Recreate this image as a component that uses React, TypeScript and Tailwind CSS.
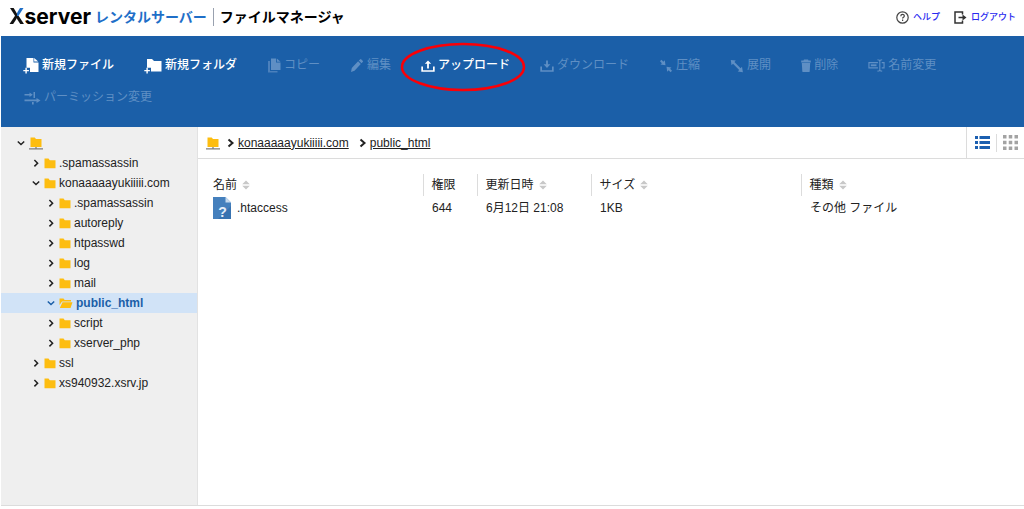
import { ReactNode } from 'react'
import clsx from 'clsx'

const FilePlusIcon = () => (
  <svg width="16" height="17" viewBox="0 0 16 17" fill="currentColor">
    <path d="M3.500 1h7v4.500H15.500V15H7v-4.200H3.500z" />
    <path d="M11.200 1l4 3.600h-4z" />
    <path d="M2.400 10.800h1.400v2.100h2.100v1.400H3.800v2.100H2.400v-2.100H.3v-1.400h2.100z" />
  </svg>
)

const FolderPlusIcon = () => (
  <svg width="18" height="17" viewBox="0 0 18 17" fill="currentColor">
    <path d="M3 2h5l2 2h7.500v10.500H7v-3.700H3z" />
    <path d="M2.400 10.800h1.400v2.100h2.100v1.400H3.800v2.100H2.400v-2.100H.3v-1.400h2.100z" />
  </svg>
)

const CopyIcon = () => (
  <svg width="14" height="16" viewBox="0 0 14 16" fill="currentColor">
    <path d="M4 1.500h5v4H13.500V13H4z" />
    <path d="M9.800 1.500l3.700 3.300H9.800z" />
    <path d="M1 4h2v10h7.500v1.500H1z" opacity=".7" />
  </svg>
)

const PencilIcon = () => (
  <svg width="14" height="16" viewBox="0 0 14 16" fill="currentColor">
    <path d="M10 2.400a1 1 0 011.400 0l1.300 1.300a1 1 0 010 1.400l-1.200 1.200-2.700-2.700zM8.100 4.300l2.700 2.700-6.300 6.800L1 15l.8-4z" />
  </svg>
)

const UploadIcon = () => (
  <svg width="14" height="16" viewBox="0 0 14 16" fill="currentColor">
    <path d="M7 3.500l3.200 3.300H7.900V11.500H6.100V6.800H3.800z" />
    <path d="M.3 9.500H2v3.700h10V9.500h1.700v5.200H.3z" />
  </svg>
)

const DownloadIcon = () => (
  <svg width="14" height="16" viewBox="0 0 14 16" fill="currentColor">
    <path d="M6.100 3.500h1.800v3.700h2.500L7 11 3.600 7.200h2.500z" />
    <path d="M.3 9.500H2v3.700h10V9.500h1.700v5.200H.3z" />
  </svg>
)

const CompressIcon = () => (
  <svg width="14" height="16" viewBox="0 0 14 16" fill="currentColor">
    <path d="M2.400 2.800l2 1.900 1.400-1.400.7 5-5-.7L2.900 6.200 1 4.200zM11.600 15.200l-2-1.900-1.400 1.400-.7-5 5 .7-1.400 1.400 1.900 2z" />
  </svg>
)

const ExpandIcon = () => (
  <svg width="14" height="16" viewBox="0 0 14 16" fill="currentColor">
    <path d="M.8 3l5 .6-1.400 1.400 6.200 6.200 1.400-1.400.9 5.400-5.200-.8 1.500-1.400L3 6.800 1.500 8.300z" />
  </svg>
)

const TrashIcon = () => (
  <svg width="10" height="16" viewBox="0 0 10 16" fill="currentColor">
    <path d="M3 2.500h4l.5 1h2.300v2H.2v-2h2.300zM.8 6h8.400l-.5 8.200a1 1 0 01-1 .9H2.300a1 1 0 01-1-.9z" />
  </svg>
)

const RenameIcon = () => (
  <svg width="17" height="16" viewBox="0 0 18 16" fill="none" stroke="currentColor" strokeWidth="1.200">
    <path d="M10.500 5.500H1v5.500h9.500M14.500 5.500H17v5.500h-2.500M10 2.500c1.700 0 2.500.4 2.500 1.500v9c0 1.100-.8 1.500-2.500 1.500M15 2.500c-1.700 0-2.500.4-2.500 1.500M15 14.500c-1.700 0-2.500-.4-2.500-1.500" />
    <path d="M3 8.300h6" strokeWidth="2" />
  </svg>
)

const PermissionIcon = () => (
  <svg width="18" height="16" viewBox="0 0 18 16" fill="currentColor">
    <path d="M1.500 5h5V3.500l3.300 2.300-3.300 2.300V6.600h-5zM10.500 3H12v6h-1.500zM1.500 10.500h12V9l4 2.500-4 2.500v-1.700h-12zM9 13h1.700v2.500H9z" />
  </svg>
)

const FolderIcon = () => (
  <svg width="12" height="12" viewBox="0 0 12 12">
    <path d="M.5 1.500h4l1.300 1.700h5.700v8H.5z" fill="#fdbd10" />
  </svg>
)

const OpenFolderIcon = () => (
  <svg width="14" height="12" viewBox="0 0 14 12" fill="#fdbd10">
    <path d="M.5 1.500h4L5.700 3H12v1.500H3L.5 8z" />
    <path d="M3.500 5.200h10L11.500 11H.8z" />
  </svg>
)

const ServerFolderIcon = () => (
  <svg width="14" height="14" viewBox="0 0 14 14">
    <path d="M1.500 1.500h4.200L7 3h5.500v8h-11z" fill="#fdbd10" />
    <path d="M0 12.800h14M7 11v2" stroke="#7d7d7d" strokeWidth="1.300" />
  </svg>
)

const Chevron = ({ open, bold, className }: { open?: boolean; bold?: boolean; className?: string }) => (
  <svg width="8" height="10" viewBox="0 0 8 10" fill="none" stroke="currentColor" strokeWidth={bold ? 2 : 1.5} className={className}>
    <path d={open ? 'M.8 3.500L4 6.500l3.200-3' : bold ? 'M1.500 1.500L5.500 5l-4 3.500' : 'M2.400 2L5.600 5.200l-3.200 3.200'} />
  </svg>
)

const SortIcon = () => (
  <svg width="8" height="10" viewBox="0 0 8 10" fill="#c8c8c8">
    <path d="M4 .5L7.800 4.200H.2zM4 9.500L.2 5.800h7.600z" />
  </svg>
)

const UnknownFileIcon = () => (
  <span className="relative flex h-[22px] w-[18px] shrink-0 items-center justify-center">
    <svg width="18" height="22" viewBox="0 0 18 22" className="absolute inset-0">
      <path d="M0 0h12.500L18 5.500V22H0z" fill="#4580bd" />
      <path d="M18 9v13H5z" fill="#2c65a5" opacity=".5" />
      <path d="M12.500 0v5.500H18z" fill="#c6daee" />
    </svg>
    <span className="relative pt-2 pl-px text-sm leading-4 font-bold text-[#e4eef8]">?</span>
  </span>
)

const actions: { label: string; icon: ReactNode; enabled?: boolean; marked?: boolean }[] = [
  { label: '新規ファイル', icon: <FilePlusIcon />, enabled: true },
  { label: '新規フォルダ', icon: <FolderPlusIcon />, enabled: true },
  { label: 'コピー', icon: <CopyIcon /> },
  { label: '編集', icon: <PencilIcon /> },
  { label: 'アップロード', icon: <UploadIcon />, enabled: true, marked: true },
  { label: 'ダウンロード', icon: <DownloadIcon /> },
  { label: '圧縮', icon: <CompressIcon /> },
  { label: '展開', icon: <ExpandIcon /> },
  { label: '削除', icon: <TrashIcon /> },
  { label: '名前変更', icon: <RenameIcon /> },
  { label: 'パーミッション変更', icon: <PermissionIcon /> },
]

const tree = [
  { name: '.spamassassin', level: 1 },
  { name: 'konaaaaayukiiiii.com', level: 1, open: true },
  { name: '.spamassassin', level: 2 },
  { name: 'autoreply', level: 2 },
  { name: 'htpasswd', level: 2 },
  { name: 'log', level: 2 },
  { name: 'mail', level: 2 },
  { name: 'public_html', level: 2, open: true, selected: true },
  { name: 'script', level: 2 },
  { name: 'xserver_php', level: 2 },
  { name: 'ssl', level: 1 },
  { name: 'xs940932.xsrv.jp', level: 1 },
]

const columns = [
  { label: '名前', sortable: true, width: 'w-[225px]' },
  { label: '権限', sortable: false, width: 'w-[54px]' },
  { label: '更新日時', sortable: true, width: 'w-[114px]' },
  { label: 'サイズ', sortable: true, width: 'w-[210px]' },
  { label: '種類', sortable: true, width: '' },
]

function Header() {
  return (
    <header className="flex h-9 items-center justify-between pr-2 pb-0.5 pl-2">
      <h1 className="flex items-center text-sm font-bold text-black">
        <span className="font-['Inter',sans-serif] text-[21px] leading-6 font-bold">
          <span className="bg-[conic-gradient(#1f6fc8_90deg,#111_90deg)] bg-clip-text text-transparent">X</span>
          server
        </span>
        <span className="ml-1 text-[#1f6fc8]">レンタルサーバー</span>
        <span className="mx-1.5 h-[18px] w-px bg-gray-400" />
        <span>ファイルマネージャ</span>
      </h1>
      <nav className="flex items-center gap-3.5 text-[9px] font-medium text-[#2a2af0]">
        <a href="#help" className="flex items-center gap-1">
          <svg width="13" height="13" viewBox="0 0 13 13" fill="none" stroke="#444" strokeWidth="1.200">
            <circle cx="6.500" cy="6.500" r="5.700" />
            <path d="M4.800 5.200c0-2.300 3.500-2.300 3.500-.2 0 1.300-1.700 1.300-1.700 2.600M6.600 8.600v1.300" />
          </svg>
          ヘルプ
        </a>
        <a href="#logout" className="flex items-center gap-1">
          <svg width="13" height="13" viewBox="0 0 13 13">
            <path d="M8.500 3.500V1H1v11h7.500V9.500" fill="none" stroke="#333" strokeWidth="1.500" />
            <path d="M4.500 5.700h4V3.500l4 3-4 3V7.300h-4z" fill="#333" />
          </svg>
          ログアウト
        </a>
      </nav>
    </header>
  )
}

function Toolbar() {
  return (
    <div className="flex flex-wrap gap-x-[30px] bg-[#1b5fa8] pt-[13px] pr-6 pb-3.5 pl-[22px]">
      {actions.map((a) => (
        <button
          key={a.label}
          disabled={!a.enabled}
          className={clsx(
            'relative flex h-8 items-center gap-[3px] whitespace-nowrap',
            a.enabled ? 'font-medium text-white' : 'text-[#5f8fc4]',
          )}
        >
          {a.icon}
          {a.label}
          {a.marked && (
            <svg width="126" height="50" viewBox="0 0 126 50" className="pointer-events-none absolute -top-[7px] -left-[21px]">
              <ellipse cx="63" cy="25" rx="61" ry="23" fill="none" stroke="#fb0007" strokeWidth="2.500" />
            </svg>
          )}
        </button>
      ))}
    </div>
  )
}

function Sidebar() {
  return (
    <aside className="w-[197px] shrink-0 border-r border-[#e2e2e2] bg-[#efefef] pt-1.5">
      <button className="flex h-5 w-full items-center gap-1 pl-4" aria-label="ルート">
        <Chevron open />
        <ServerFolderIcon />
      </button>
      {tree.map((node, i) => (
        <button
          key={i}
          className={clsx(
            'flex h-5 w-full items-center',
            node.level === 1 ? 'pl-[31px]' : 'pl-[46px]',
            node.selected && 'bg-[#d1e3f7] font-bold text-[#1b5fa8]',
          )}
        >
          <Chevron open={node.open} />
          <span className="mr-[3px] ml-1">{node.selected ? <OpenFolderIcon /> : <FolderIcon />}</span>
          {node.name}
        </button>
      ))}
    </aside>
  )
}

function Breadcrumb() {
  return (
    <div className="flex h-8 border-b border-[#dcdcdc]">
      <nav className="flex flex-1 items-center pl-2">
        <a href="#root" aria-label="ルート">
          <ServerFolderIcon />
        </a>
        <Chevron bold className="mr-[3px] ml-[7px]" />
        <a href="#domain" className="underline">konaaaaayukiiiii.com</a>
        <Chevron bold className="mr-[3px] ml-2.5" />
        <a href="#public_html" className="underline">public_html</a>
      </nav>
      <div className="flex items-center gap-1.5 border-l border-[#dcdcdc] pr-1.5 pl-2">
        <button aria-label="リスト表示">
          <svg width="15" height="15" viewBox="0 0 15 15" fill="#1b5fb0">
            <path d="M0 1h3v3H0zM4.500 1H15v3H4.500zM0 6h3v3H0zM4.500 6H15v3H4.500zM0 11h3v3H0zM4.500 11H15v3H4.500z" />
          </svg>
        </button>
        <span className="h-[18px] w-px bg-[#dcdcdc]" />
        <button aria-label="アイコン表示">
          <svg width="15" height="15" viewBox="0 0 15 15" fill="#a3a3a3">
            <path d="M0 0h3.500v3.500H0zM5.750 0h3.500v3.500h-3.500zM11.500 0H15v3.500h-3.500zM0 5.750h3.500v3.500H0zM5.750 5.750h3.500v3.500h-3.500zM11.500 5.750H15v3.500h-3.500zM0 11.500h3.500V15H0zM5.750 11.500h3.500V15h-3.500zM11.500 11.500H15V15h-3.500z" />
          </svg>
        </button>
      </div>
    </div>
  )
}

function FileTable() {
  return (
    <table className="mt-[15px] w-full table-fixed text-left">
      <thead>
        <tr>
          {columns.map((c, i) => (
            <th
              key={c.label}
              className={clsx('h-[22px] p-0 font-normal', c.width, i ? 'border-l border-[#dcdcdc] pl-2' : 'pl-[15px]')}
            >
              <span className="flex items-center gap-[5px]">
                {c.label}
                {c.sortable && <SortIcon />}
              </span>
            </th>
          ))}
        </tr>
      </thead>
      <tbody>
        <tr>
          <td className="h-6 p-0 pl-[15px]">
            <span className="flex items-center gap-1.5">
              <UnknownFileIcon />
              .htaccess
            </span>
          </td>
          <td className="p-0 pl-[9px]">644</td>
          <td className="p-0 pl-[9px]">6月12日 21:08</td>
          <td className="p-0 pl-[9px]">1KB</td>
          <td className="p-0 pl-[9px]">その他 ファイル</td>
        </tr>
      </tbody>
    </table>
  )
}

export default function App() {
  return (
    <div className="flex min-h-screen flex-col bg-white pb-[3px] pl-px font-['Liberation_Sans','Noto_Sans_CJK_JP',sans-serif] text-xs text-[#222]">
      <Header />
      <Toolbar />
      <div className="flex flex-1 border-b border-[#dcdcdc]">
        <Sidebar />
        <main className="min-w-0 flex-1">
          <Breadcrumb />
          <FileTable />
        </main>
      </div>
    </div>
  )
}
